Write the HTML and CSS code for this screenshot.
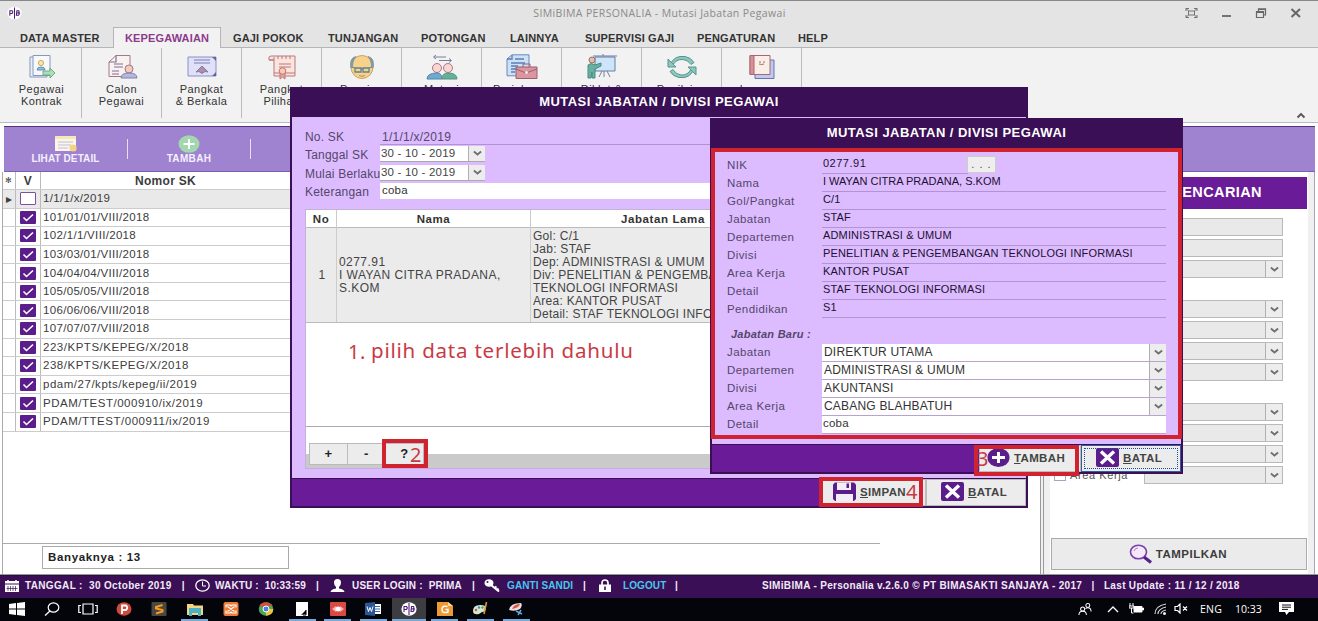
FILE: index.html
```html
<!DOCTYPE html>
<html lang="id">
<head>
<meta charset="utf-8">
<title>SIMiBIMA PERSONALIA - Mutasi Jabatan Pegawai</title>
<link rel="stylesheet" href="styles.css">
</head>
<body>
<svg width="0" height="0" class="defs">
  <symbol id="chev" viewBox="0 0 8 6"><path d="M.8 1.200 4 3.800l3.200-2.600" fill="none" stroke="#707070" stroke-width="1.700"/></symbol>
  <symbol id="check" viewBox="0 0 15 13"><path d="M3 6.500 6 9.500 12.500 3.500" fill="none" stroke="#fff" stroke-width="1.600"/></symbol>
  <symbol id="xbox" viewBox="0 0 23 19"><rect width="23" height="19" rx="2" fill="#5b1c8c"/><path d="M5 3.500 18 15.500M18 3.500 5 15.500" stroke="#fff" stroke-width="3.400"/></symbol>
  <symbol id="pb" viewBox="0 0 16 14"><ellipse cx="8" cy="7" rx="7.600" ry="6.700" fill="#fff"/><path d="M3 10V4.500h2.500q1.500 1.500 0 3H3M8 1v12M10.500 4.500h2q1 1.200-.5 2.300 2 1 0 2.700h-2zM10 7h4" fill="none" stroke="#4b1d78" stroke-width="1.100"/></symbol>
</svg>
<div class="app">
  <header class="titlebar">
    <svg class="logo" viewBox="0 0 16 14"><use href="#pb"/></svg>
    <span class="caption">SIMiBIMA PERSONALIA - Mutasi Jabatan Pegawai</span>
    <svg class="winbtns" viewBox="0 0 116 12" fill="none" stroke="#666" stroke-width="1.200">
      <path d="M1 4V1.500h3M9 1.500h3V4M12 8v2.500H9M4 10.500H1V8M3.500 4h6v4h-6zM1 1.500 3.500 4M12 1.500 9.500 4M1 10.500 3.500 8M12 10.500 9.500 8" stroke-width=".9"/>
      <path d="M37 9h9" stroke-width="1.800"/>
      <path d="M71.500 4.500h7v6h-7zM71.500 5.500h7M73.500 4V1.800h7V8h-1.500M73.500 2.500h7"/>
      <path d="M106.500 2 115 10M115 2l-8.500 8" stroke-width="2"/>
    </svg>
  </header>
  <nav class="tabs">
    <span class="tab w1">DATA MASTER</span><span class="tab on">KEPEGAWAIAN</span><span class="tab w2">GAJI POKOK</span><span class="tab w3">TUNJANGAN</span><span class="tab w4">POTONGAN</span><span class="tab w5">LAINNYA</span><span class="tab w6">SUPERVISI GAJI</span><span class="tab w7">PENGATURAN</span><span class="tab w8">HELP</span>
  </nav>
  <section class="ribbon">
    <div class="tool"><svg viewBox="0 0 32 26"><path d="M4 3h17v20H4z" fill="#e9eef8" stroke="#7d8fb8"/><path d="M7 1.500h17v20H7z" fill="#f7f9fc" stroke="#7d8fb8"/><circle cx="15" cy="9" r="2.600" fill="#f8e6a0" stroke="#c9a845"/><path d="M11 16q0-3 4-3t4 3z" fill="#8cb7d9" stroke="#5686b0"/><path d="M17 17h7v-3l5 5-5 5v-3h-7z" fill="#a7dcae" stroke="#5fa878"/></svg><span>Pegawai<br>Kontrak</span></div>
    <div class="tool"><svg viewBox="0 0 32 26"><path d="M10 1.500h14v21H3V8z" fill="#faf0f0" stroke="#9a6f80"/><path d="M10 1.500V8H3M8 10h9M8 13h9M6 17h7M6 20h7" fill="none" stroke="#76618b" stroke-width="1.200"/><circle cx="23" cy="15" r="4" fill="#f2c9b8" stroke="#9a6f80"/><path d="M15 24q0-5 8-5t8 5z" fill="#a9b3e0" stroke="#7c72a0"/></svg><span>Calon<br>Pegawai</span></div>
    <div class="tool"><svg viewBox="0 0 32 26"><path d="M2 3h28v19H2z" fill="#dfe0fa" stroke="#7e86c0"/><path d="M8 6h16M8 9h16" stroke="#6e70b4" stroke-width="1.200"/><path d="M10 18l6-6 6 6-3-.5-3 2-3-2z" fill="#b07f97" stroke="#6e70a4"/><path d="M26 3h4v4zM30 18v4h-4z" fill="#55598c"/></svg><span>Pangkat<br>&amp; Berkala</span></div>
    <div class="tool"><svg viewBox="0 0 32 26"><path d="M3 6q-1-4 2-4h24v20H8V6z" fill="#fce3d9" stroke="#b56a72"/><path d="M3 6h5V3M12 2v3M16 2v3M20 2v3M24 2v3M13 10h12M13 13h12M8 19h21" fill="none" stroke="#b56a72"/><path d="M14 18v7l2.500-2 2.500 2v-7" fill="#e89b92" stroke="#b56a72"/><circle cx="16.500" cy="17" r="3.300" fill="#fbc7a7" stroke="#b56a72"/></svg><span>Pangkat<br>Pilihan</span></div>
    <div class="tool"><svg viewBox="0 0 32 26"><ellipse cx="16" cy="13" rx="11" ry="11.500" fill="#f8cf83" stroke="#c79a55"/><path d="M5 14Q3 4 10 2.500 7 5 6.500 12zM27 14q2-10-5-11.500 3 2.500 3.500 9.500z" fill="#78909a" stroke="#78909a"/><path d="M9 14h6v4H9zM17 14h6v4h-6zM15 15h2M6 13l3 1M26 13l-3 1" fill="none" stroke="#4e7886" stroke-width="1.300"/><path d="M13 21.500q3 1.500 6 0" stroke="#bd7e3c" fill="none"/></svg><span>Pensiun</span></div>
    <div class="tool"><svg viewBox="0 0 32 26"><path d="M8 3h12M10 1 7.500 3 10 5M13 6.500h12M23 4.500l2.500 2-2.500 2" fill="none" stroke="#6a7591"/><circle cx="11" cy="14" r="4.500" fill="#f9d3cf" stroke="#a96a78"/><circle cx="22" cy="14" r="4.500" fill="#f9d3cf" stroke="#a96a78"/><path d="M1 25q0-6 10-6 5 0 5 6z" fill="#5da5cd" stroke="#477aa0"/><path d="M16 25q0-6 6-6 9 0 9 6z" fill="#53ac92" stroke="#498575"/></svg><span>Mutasi</span></div>
    <div class="tool"><svg viewBox="0 0 32 26"><path d="M6 .8h17v21H1V5z" fill="#c6e0f7" stroke="#5d7fb8"/><path d="M6 1v4H1M9 5h9M5 9h14M5 12h7M5 15h5M5 18h4" fill="none" stroke="#4f70b0" stroke-width="1.300"/><path d="M10 13h21v11.500H10z" fill="#d98e96" stroke="#934f68"/><path d="M17 13v-3h7v3M10 15l10 4 11-4" fill="none" stroke="#934f68"/><circle cx="20.500" cy="18.500" r="1.300" fill="#fff"/></svg><span>Perjalanan</span></div>
    <div class="tool"><svg viewBox="0 0 32 26"><path d="M7 2h24M17 0v2M9 3h20v14H9z" fill="#cbe3fa" stroke="#5a719e"/><path d="M18 17v6M16 17l-3 6M21 17l3 6" stroke="#707090"/><circle cx="6" cy="6" r="3" fill="#e9b79e" stroke="#8b685d"/><path d="M2 24V11q3-3 7 0l6-2v3l-6 3v9H6v-6l-1 6z" fill="#59aa98" stroke="#3c7f78"/></svg><span>Diklat &amp;</span></div>
    <div class="tool"><svg viewBox="0 0 32 26"><path d="M4 11Q8 1 19 2.500q6 1 9 6l-3 2Q22 6 17 5.500 10 5 7 11zM28 15q-4 10-15 8.500-6-1-9-6l3-2q3 5 8 5.500 7 .5 10-6z" fill="#81c3b5" stroke="#438b86"/><path d="M2 5v8h8zM30 21v-8h-8z" fill="#81c3b5" stroke="#438b86"/></svg><span>Penilaian</span></div>
    <div class="tool"><svg viewBox="0 0 32 26"><path d="M9 6h19v18.500H9z" fill="#b6c6ee" stroke="#5c67a6"/><path d="M4 1.500h20v19H4z" fill="#fdeee6" stroke="#9c5b6c"/><path d="M4 1.500h4v19H4z" fill="#d9848b" stroke="#9c5b6c"/><path d="M13 8h2M17 8h2M13 10q3 1 5 0" stroke="#9c5b6c" fill="none"/></svg><span>Laporan</span></div>
    <svg class="collapse" viewBox="0 0 10 7"><path d="M1.500 5.500 5 2l3.500 3.500" fill="none" stroke="#555" stroke-width="1.800"/></svg>
  </section>

  <main class="work">
    <div class="toolbar">
      <div class="act a1"><svg viewBox="0 0 24 18"><path d="M1 1h21v15H1z" fill="#fbf6ea"/><path d="M1 1h21v3H1z" fill="#f5e8b9"/><path d="M4 7h15M4 10h13M4 13h10" stroke="#c6bcd6"/><circle cx="19" cy="13" r="3.600" fill="#f5d384"/></svg><b>LIHAT DETAIL</b></div>
      <i class="sep"></i>
      <div class="act a2"><svg viewBox="0 0 24 18"><ellipse cx="12" cy="9" rx="10.500" ry="8.700" fill="#a3d7ae"/><path d="M12 4v10M6.500 9h11" stroke="#fff" stroke-width="2"/></svg><b>TAMBAH</b></div>
      <i class="sep"></i>
    </div>
    <div class="panes">
      <section class="left">
        <div class="row head"><span>✻</span><span>V</span><b>Nomor SK</b></div>
        <div class="row cur"><span>▸</span><span><i class="cb off"></i></span><em>1/1/1/x/2019</em></div>
        <div class="row"><span></span><span><svg class="cb"><use href="#check"/></svg></span><em>101/01/01/VIII/2018</em></div>
        <div class="row"><span></span><span><svg class="cb"><use href="#check"/></svg></span><em>102/1/1/VIII/2018</em></div>
        <div class="row"><span></span><span><svg class="cb"><use href="#check"/></svg></span><em>103/03/01/VIII/2018</em></div>
        <div class="row"><span></span><span><svg class="cb"><use href="#check"/></svg></span><em>104/04/04/VIII/2018</em></div>
        <div class="row"><span></span><span><svg class="cb"><use href="#check"/></svg></span><em>105/05/05/VIII/2018</em></div>
        <div class="row"><span></span><span><svg class="cb"><use href="#check"/></svg></span><em>106/06/06/VIII/2018</em></div>
        <div class="row"><span></span><span><svg class="cb"><use href="#check"/></svg></span><em>107/07/07/VIII/2018</em></div>
        <div class="row"><span></span><span><svg class="cb"><use href="#check"/></svg></span><em>223/KPTS/KEPEG/X/2018</em></div>
        <div class="row"><span></span><span><svg class="cb"><use href="#check"/></svg></span><em>238/KPTS/KEPEG/X/2018</em></div>
        <div class="row"><span></span><span><svg class="cb"><use href="#check"/></svg></span><em>pdam/27/kpts/kepeg/ii/2019</em></div>
        <div class="row"><span></span><span><svg class="cb"><use href="#check"/></svg></span><em>PDAM/TEST/000910/ix/2019</em></div>
        <div class="row"><span></span><span><svg class="cb"><use href="#check"/></svg></span><em>PDAM/TTEST/000911/ix/2019</em></div>
        <div class="count"><b>Banyaknya : 13</b></div>
      </section>
      <aside class="right">
        <div class="search">
          <h2>PENCARIAN</h2>
          <div class="fields">
            <div class="inp"></div><div class="inp"></div><div class="inp dd"><u><svg><use href="#chev"/></svg></u></div>
            <div class="inp dd gap"><u><svg><use href="#chev"/></svg></u></div><div class="inp dd"><u><svg><use href="#chev"/></svg></u></div><div class="inp dd"><u><svg><use href="#chev"/></svg></u></div><div class="inp dd"><u><svg><use href="#chev"/></svg></u></div>
            <div class="inp dd gap"><u><svg><use href="#chev"/></svg></u></div><div class="inp dd"><u><svg><use href="#chev"/></svg></u></div><div class="inp dd"><u><svg><use href="#chev"/></svg></u></div>
            <div class="frow"><i></i><label>Area Kerja</label><div class="inp dd"><u><svg><use href="#chev"/></svg></u></div></div>
          </div>
          <div class="go"><svg viewBox="0 0 24 20"><ellipse cx="9.500" cy="8" rx="8" ry="6.800" fill="#f3e9fa" stroke="#7a3fa8" stroke-width="1.600"/><path d="M5 7q1-3 4-3" fill="none" stroke="#a87cc9"/><path d="M15 13l7 5.500" stroke="#55208a" stroke-width="3.200"/></svg><b>TAMPILKAN</b></div>
        </div>
      </aside>
    </div>
  </main>

  <footer class="status">
    <svg class="s1" viewBox="0 0 14 12"><path d="M0 1h14v2.500H0zM0 4.500h14V12H0z" fill="#fff"/><path d="M3 6v5M5.500 6v5M8 6v5M10.500 6v5M1.500 8.500h11" stroke="#3a0f55" stroke-width=".7"/><path d="M3 0v2M11 0v2" stroke="#fff" stroke-width="1.500"/></svg>
    <b class="t1">TANGGAL :&nbsp; 30 October 2019 <i>|</i></b>
    <svg class="s2" viewBox="0 0 15 13"><ellipse cx="7.500" cy="6.500" rx="6.700" ry="5.700" fill="none" stroke="#fff" stroke-width="1.300"/><path d="M7.500 2.500V7H11" fill="none" stroke="#fff"/></svg>
    <b class="t2">WAKTU :&nbsp; 10:33:59 <i>|</i></b>
    <svg class="s3" viewBox="0 0 15 13"><path d="M7.500 0Q11 0 11 3.500T9 8v1.500q5 .5 5.500 3.500H.5Q1 10 6 9.500V8Q4 7 4 3.500T7.500 0z" fill="#fff"/></svg>
    <b class="t3">USER LOGIN :&nbsp; PRIMA <i>|</i></b>
    <svg class="s4" viewBox="0 0 16 13"><ellipse cx="5" cy="4" rx="4.500" ry="3.800" fill="#fff"/><circle cx="3.500" cy="3" r="1" fill="#3a0f55"/><path d="M7 6l8 6.500M10.500 9l2-1.500M13 11l1.500-1.500" stroke="#fff" stroke-width="2"/></svg>
    <b class="t4"><a>GANTI SANDI</a> <i>|</i></b>
    <svg class="s5" viewBox="0 0 12 13"><path d="M3 6V4q0-3 3-3t3 3v2" fill="none" stroke="#fff" stroke-width="1.700"/><path d="M0 5.500h12V13H0z" fill="#fff"/><path d="M6 7.500v3.500" stroke="#3a0f55" stroke-width="1.600"/></svg>
    <b class="t5"><a>LOGOUT</a> <i>|</i></b>
    <b class="t6">SIMiBIMA - Personalia v.2.6.0 © PT BIMASAKTI SANJAYA - 2017 &nbsp; | &nbsp; Last Update : 11 / 12 / 2018</b>
  </footer>
  <footer class="task">
    <div class="apps">
      <span class="nr"><svg viewBox="0 0 16 14"><path d="M0 2l7-1v5.600H0zM8 .9 16 0v6.600H8zM0 7.500h7V13l-7-1zM8 7.500h8V14l-8-1z" fill="#fff"/></svg></span>
      <span class="nr"><svg viewBox="0 0 16 14"><ellipse cx="9.500" cy="5.500" rx="5.300" ry="4.700" fill="none" stroke="#fff" stroke-width="1.200"/><path d="M6 9l-5 4.500" stroke="#fff" stroke-width="1.300"/></svg></span>
      <span class="nr"><svg viewBox="0 0 20 14" class="wide"><path d="M5 2h10v10H5zM3 3.500H.8v7H3M17 3.500h2.200v7H17" fill="none" stroke="#fff" stroke-width="1.200"/></svg></span>
      <span class="nr"><svg viewBox="0 0 16 14"><ellipse cx="8" cy="7" rx="7.500" ry="6.800" fill="#cf4a3d"/><path d="M6 12V3.500h4q2.500 2 0 4.500H6" fill="none" stroke="#fff" stroke-width="1.800"/></svg></span>
      <span class="nr"><svg viewBox="0 0 16 14"><rect x=".5" width="15" height="14" rx="1" fill="#4a4743"/><path d="M11.500 3 5 5v1.500l6.500 1.500v1.500L5 11.500" fill="none" stroke="#f59a23" stroke-width="2"/></svg></span>
      <span><svg viewBox="0 0 16 14"><path d="M0 2h6l1 1.500h9V13H0z" fill="#f3d582"/><path d="M2 6h12v8h-3v-3H5v3H2z" fill="#4db1c5"/></svg></span>
      <span class="nr"><svg viewBox="0 0 16 14"><rect x=".5" width="15" height="14" rx="2" fill="#ee7b36"/><path d="M4.500 4.500l7 5M11.500 4.500l-7 5M3 5.500V3h4L8 4l1-1h4v2.500M3 8.500V11h4l1-1 1 1h4V8.500" fill="none" stroke="#fff" stroke-width="1.200"/></svg></span>
      <span class="nr"><svg viewBox="0 0 16 14"><ellipse cx="8" cy="7" rx="7.300" ry="6.700" fill="#4ca653"/><path d="M8 7 1.500 3.500Q4 .3 8 .3t6.700 3.500H8z" fill="#d94d3d"/><path d="M8 7h7.300Q15 13 8 13.700z" fill="#f2c43e"/><circle cx="8" cy="7" r="3" fill="#4b83dc" stroke="#fff"/></svg></span>
      <span><svg viewBox="0 0 16 14"><path d="M2 0h12v14H2z" fill="#fff"/><path d="M7 13l5-5v4z" fill="#000"/><path d="M12 8v5H9" stroke="#000" fill="none"/></svg></span>
      <span><svg viewBox="0 0 16 14"><rect width="16" height="14" rx="1" fill="#d94a45"/><path d="M2 7l4-3v6zM14 7l-4-3v6z" fill="#ffb4ad"/><circle cx="8" cy="7" r="2.500" fill="#fff"/></svg></span>
      <span><svg viewBox="0 0 16 14"><path d="M8 2h8v10H8z" fill="#fff"/><path d="M10 4.500h5M10 7h5M10 9.500h5" stroke="#3567ab"/><path d="M0 1l10-1v14L0 13z" fill="#2b5797"/><path d="M2 4.500 3.500 9.500 5 5.500l1.500 4L8 4.500" stroke="#fff" fill="none"/></svg></span>
      <span class="act-app"><svg viewBox="0 0 16 14"><use href="#pb"/></svg></span>
      <span><svg viewBox="0 0 16 14"><path d="M0 0h11l5 4v10H0z" fill="#ed9a35"/><path d="M11 0v4h5z" fill="#fbd9a4"/><path d="M10.500 4.500Q5 3 5 7.500T11 10V7.500H8.500" fill="none" stroke="#fff" stroke-width="1.500"/></svg></span>
      <span><svg viewBox="0 0 16 14"><path d="M1 9Q1 3 8 3t6 4q-1 3-4 3l-3 2Q1 13 1 9z" fill="#d5e8cf"/><circle cx="4" cy="8" r="1.200" fill="#d05040"/><circle cx="7" cy="5.500" r="1.200" fill="#4a83c3"/><circle cx="10.500" cy="5.500" r="1.200" fill="#4aa650"/><path d="M14.500 0 12 12" stroke="#d6974a" stroke-width="1.600"/></svg></span>
      <span><svg viewBox="0 0 16 14"><path d="M1 8Q2 1 13 1q2 2-1 6-5 3-11 1z" fill="#f1dede"/><path d="M4 7q2-5 8-5-1 4-8 5z" fill="#d8584c"/><path d="M8 9l6 3M13 8l-3 5" stroke="#5fa7dd" stroke-width="1.500"/></svg></span>
    </div>
    <div class="tray">
      <svg class="people" viewBox="0 0 15 13" fill="none" stroke="#fff" stroke-width="1.100"><circle cx="5" cy="6.500" r="2.200"/><path d="M1 13q0-4 4-4t4 4"/><circle cx="10.500" cy="2.800" r="2.100"/><path d="M8 6q1-.8 2.500-.8 3.500 0 3.500 4"/></svg>
      <svg class="caret" viewBox="0 0 12 8"><path d="M1 7l5-5 5 5" fill="none" stroke="#fff" stroke-width="1.300"/></svg>
      <svg class="battery" viewBox="0 0 15 11"><path d="M5 3.500h8v5.500H5zM13.500 5h1v2h-1z" fill="#fff" stroke="#fff"/><path d="M1 0v3M4 0v3M0 3h5v2H0zM2.500 5v5h2" fill="none" stroke="#fff"/></svg>
      <svg class="wifi" viewBox="0 0 13 12" fill="none" stroke="#ddd" stroke-width="1.100"><path d="M1 11Q1 3 12 1M4 11q0-5 8-7M7 11q0-3 5-4"/><circle cx="10.500" cy="10.500" r="1" fill="#fff"/></svg>
      <svg class="volume" viewBox="0 0 14 11" fill="none" stroke="#fff" stroke-width="1.200"><path d="M1 3.500h2.500L6 1v9L3.500 7.500H1zM9 3.500l4 4M13 3.500l-4 4"/></svg>
      <span class="eng">ENG</span><span class="clk">10:33</span>
      <svg class="notif" viewBox="0 0 15 13"><path d="M0 0h15v10h-5l-2.500 3L6 10H0z" fill="#fff"/><path d="M3 3h9M3 5.200h9M3 7.400h6" stroke="#111"/></svg>
    </div>
  </footer>

  <div class="dlg d1">
    <div class="dtitle">MUTASI JABATAN / DIVISI PEGAWAI</div>
    <div class="dbody">
      <div class="frm">
        <label>No. SK</label><span class="val">1/1/1/x/2019</span>
        <label>Tanggal SK</label><span class="date">30 - 10 - 2019<u><svg><use href="#chev"/></svg></u></span>
        <label>Mulai Berlaku</label><span class="date">30 - 10 - 2019<u><svg><use href="#chev"/></svg></u></span>
        <label>Keterangan</label><span class="txt">coba</span>
      </div>
      <div class="grid">
        <div class="gh"><b>No</b><b>Nama</b><b class="jl">Jabatan Lama</b></div>
        <div class="gr"><span>1</span><span>0277.91<br>I WAYAN CITRA PRADANA,<br>S.KOM</span><span>Gol: C/1<br>Jab: STAF<br>Dep: ADMINISTRASI &amp; UMUM<br>Div: PENELITIAN &amp; PENGEMBANGAN<br>TEKNOLOGI INFORMASI<br>Area: KANTOR PUSAT<br>Detail: STAF TEKNOLOGI INFORMASI</span></div>
        <div class="gempty"></div>
        <div class="gnav"><b>+</b><b>-</b><b>?</b></div>
      </div>
    </div>
    <div class="dfoot"><div class="btn simpan"><svg viewBox="0 0 23 19"><path d="M2 .5h19l2 2V17l-2 2H2l-2-2V2.500z" fill="#5b1c8c"/><path d="M4 .5h14v7.500H4zM3 12h17v7H3z" fill="#f3edf5"/><path d="M13.500 1.500h2.500v4.500h-2.500z" fill="#5b1c8c"/></svg><b><u>S</u>IMPAN</b></div><div class="btn batal"><svg><use href="#xbox"/></svg><b><u>B</u>ATAL</b></div></div>
  </div>

  <div class="dlg d2">
    <div class="dtitle">MUTASI JABATAN / DIVISI PEGAWAI</div>
    <div class="dbody">
      <div class="frm2">
        <label>NIK</label><span class="ln first">0277.91</span>
        <label>Nama</label><span class="ln name">I WAYAN CITRA PRADANA, S.KOM</span>
        <label>Gol/Pangkat</label><span class="ln">C/1</span>
        <label>Jabatan</label><span class="ln">STAF</span>
        <label>Departemen</label><span class="ln">ADMINISTRASI &amp; UMUM</span>
        <label>Divisi</label><span class="ln">PENELITIAN &amp; PENGEMBANGAN TEKNOLOGI INFORMASI</span>
        <label>Area Kerja</label><span class="ln">KANTOR PUSAT</span>
        <label>Detail</label><span class="ln">STAF TEKNOLOGI INFORMASI</span>
        <label>Pendidikan</label><span class="ln">S1</span>
      </div>
      <div class="dots">. . .</div>
      <div class="baru">Jabatan Baru :</div>
      <div class="frm2 edit">
        <label>Jabatan</label><span class="sel">DIREKTUR UTAMA<u><svg><use href="#chev"/></svg></u></span>
        <label>Departemen</label><span class="sel">ADMINISTRASI &amp; UMUM<u><svg><use href="#chev"/></svg></u></span>
        <label>Divisi</label><span class="sel">AKUNTANSI<u><svg><use href="#chev"/></svg></u></span>
        <label>Area Kerja</label><span class="sel">CABANG BLAHBATUH<u><svg><use href="#chev"/></svg></u></span>
        <label>Detail</label><span class="sel last">coba</span>
      </div>
    </div>
    <div class="dfoot"><div class="btn tambah"><svg viewBox="0 0 23 19"><ellipse cx="11.500" cy="9.500" rx="11" ry="9.500" fill="#5b1c8c"/><path d="M11.500 4v11M5 9.500h13" stroke="#fff" stroke-width="3"/></svg><b><u>T</u>AMBAH</b></div><div class="btn batal focus"><svg><use href="#xbox"/></svg><b><u>B</u>ATAL</b></div></div>
  </div>

  <div class="mark m0"></div>
  <div class="mark m2"></div><div class="mark m3"></div><div class="mark m4"></div>
  <div class="note n1">1.</div><div class="note n1b">pilih data terlebih dahulu</div>
  <div class="note n2">2</div><div class="note n3">3</div><div class="note n4">4</div>
</div>
</body>
</html>
```
FILE: styles.css
```css
* { box-sizing: border-box; }
body { margin: 0; font-family: "Liberation Sans", Arial, sans-serif; font-size: 11px; color: #3c3c3c; letter-spacing: .6px; }
.defs { position: absolute; }
.app { position: relative; width: 1318px; height: 621px; overflow: hidden; display: flex; flex-direction: column; background: #f2f2f2; white-space: nowrap; }
em { font-style: normal; }
svg { display: block; flex: none; }

.titlebar { height: 27px; background: #e4e4e4; border-top: 1px solid #888; display: flex; align-items: center; padding: 0 17px 2px 7px; }
.logo { width: 15px; height: 14px; }
.caption { flex: 1; text-align: center; font: 10.500px "Open Sans", sans-serif; color: #8a8a8a; letter-spacing: .37px; padding-left: 112px; }
.winbtns { width: 116px; height: 12px; }

.tabs { height: 21px; background: #e4e4e4; border-bottom: 1px solid #b5b5b5; display: flex; padding-left: 20px; font-weight: bold; font-size: 11px; color: #333; letter-spacing: .15px; }
.tab { line-height: 23px; height: 21px; }
.tab.on { width: 108px; background: #f2f2f2; border: 1px solid #b5b5b5; border-bottom: 0; color: #8d3a8d; text-align: center; line-height: 21px; }
.w1 { width: 93px; } .w2 { width: 107px; padding-left: 12px; } .w3 { width: 93px; } .w4 { width: 89px; } .w5 { width: 75px; } .w6 { width: 112px; } .w7 { width: 101px; }

.ribbon { height: 75px; background: #f2f2f2; display: flex; padding-left: 2px; border-bottom: 1px solid #b9b9c4; }
.tool { width: 80px; height: 70px; border-right: 1px solid #bcbcbc; display: flex; flex-direction: column; align-items: center; padding-top: 6px; font-size: 11px; line-height: 12px; text-align: center; color: #333; letter-spacing: .45px; }
.tool svg { width: 32px; height: 26px; opacity: .9; margin-bottom: 3px; }
.collapse { width: 10px; height: 7px; margin: 64px 12px 0 auto; }

.work { height: 452px; padding: 3px 3px 0 2px; display: flex; flex-direction: column; background: #fff; border-bottom: 1px solid #999; }
.toolbar { height: 46px; margin-left: 2px; background: #9f83d0; border-top: 1px solid #57307a; border-bottom: 1px solid #7c5caf; display: flex; align-items: center; color: #fff; }
.act { display: flex; flex-direction: column; align-items: center; font-size: 10px; letter-spacing: .1px; padding-top: 1px; color: #f6f0fc; }
.act svg { width: 24px; height: 18px; }
.a1 { width: 123px; } .a2 { width: 122px; }
.a2 b { letter-spacing: .35px; }
.sep { width: 1px; height: 20px; background: #e8def5; }
.panes { flex: 1; display: flex; min-height: 0; }
.left { width: 1032px; border-left: 1px solid #aaa; display: flex; flex-direction: column; }
.row { display: grid; grid-template-columns: 13px 25px 1fr; height: 18.580px; width: 877px; font-size: 11.500px; border-bottom: 1px solid #ccc; flex: none; align-items: center; }
.row > span { border-right: 1px solid #bbb; height: 100%; display: flex; align-items: center; justify-content: center; }
.row em { padding-left: 2px; letter-spacing: .32px; line-height: 14px; margin-top: -1px; }
.row:nth-child(n+10) em { letter-spacing: .52px; }
.head { height: 18px; font-size: 12px; font-weight: bold; letter-spacing: .3px; }
.head > span:first-child { font-size: 8px; font-weight: normal; }
.head b { text-align: center; width: 249px; }
.cur { background: #e9e9e9; }
.cb { width: 16px; height: 13px; background: #5b1c8c; border-radius: 1px; }
.cb.off { background: #fff; border: 1px solid #7c52a0; }
.count { margin-top: auto; height: 31px; width: 877px; border-top: 1px solid #aaa; padding: 2px 0 0 39px; font-size: 11.500px; color: #222; }
.count b { display: block; width: 247px; height: 23px; border: 1px solid #aaa; line-height: 21px; padding-left: 5px; letter-spacing: .65px; }
.right { flex: 1; margin-left: 6px; border-left: 1px solid #999; background: #f0f0f0; padding: 0 6px 0 9px; border-right: 1px solid #a9a0c0; box-shadow: inset 2px 0 0 #f0f0f0, inset 3px 0 0 #999; }
.search { height: 100%; background: #fff; padding: 5px 1px 0 1px; display: flex; flex-direction: column; }
.search h2 { margin: 0; height: 32px; background: #6a1b97; color: #fff; font-size: 14.500px; line-height: 31px; text-align: right; padding-right: 45px; letter-spacing: .4px; }
.fields { padding: 9px 24px 0 0; display: flex; flex-direction: column; gap: 3px; align-items: flex-end; }
.inp { width: 139px; height: 18px; border: 1px solid #b9b9b9; background: #e9e9e9; display: flex; justify-content: flex-end; }
.inp.gap { margin-top: 19px; }
.inp u, .date u, .sel u { width: 17px; border-left: 1px solid #b0b0b0; display: flex; align-items: center; justify-content: center; background: #ededed; }
u svg { width: 9px; height: 7px; }
.frow { display: flex; align-items: center; width: 232px; }
.frow i { width: 12px; height: 11px; border: 1px solid #b0a0c0; margin-left: 3px; }
.frow label { flex: 1; padding-left: 4px; color: #555; }
.go { margin-top: auto; margin-bottom: 4px; height: 32px; background: #ebebeb; border: 1px solid #aaa; display: flex; align-items: center; justify-content: center; gap: 3px; font-size: 11.500px; letter-spacing: .5px; padding-right: 2px; }
.go svg { width: 24px; height: 20px; }

.status { height: 23px; background: #3a0f55; border-top: 1px solid #2b0b40; display: flex; align-items: center; color: #f2eaf7; font-size: 10px; padding: 0 0 3px 5px; letter-spacing: .35px; }
.status a { color: #45c8ee; }
.status b { display: flex; justify-content: space-between; white-space: pre; }
.status i { font-style: normal; }
.s1 { width: 14px; height: 12px; margin-right: 6px; }
.t1 { width: 160px; margin-right: 10px; } .s2 { width: 15px; height: 13px; margin-right: 5px; } .t2 { width: 104px; letter-spacing: .15px; margin-right: 11px; } .s3 { width: 15px; height: 13px; margin-right: 7px; } .t3 { width: 123px; letter-spacing: .2px; margin-right: 9px; } .s4 { width: 16px; height: 13px; margin-right: 7px; } .t4 { width: 79px; letter-spacing: .1px; margin-right: 13px; } .s5 { width: 12px; height: 13px; margin-right: 12px; } .t5 { width: 55px; letter-spacing: .1px; margin-right: 84px; }
.status .t6 { display: block; white-space: nowrap; letter-spacing: .32px; }

.task { height: 23px; background: #04050a; display: flex; justify-content: space-between; color: #fff; }
.apps { display: flex; padding-left: 1px; }
.apps span { width: 27px; margin-right: 8.700px; height: 23px; border-bottom: 2px solid #76aadb; display: flex; justify-content: center; padding-top: 4px; }
.apps span:first-child { margin-left: 2px; }
.apps .nr { border-color: transparent; }
.apps .act-app { background: #3d3d41; width: 34px; margin-left: -3.500px; margin-right: 5.200px; }
.apps svg { width: 16px; height: 14px; }
.apps .wide { width: 20px; }
.tray { display: flex; align-items: center; padding: 0 24px 2px 0; font: 10.500px "Open Sans", sans-serif; letter-spacing: .2px; }
.people { width: 14px; height: 14px; margin-right: 15px; } .caret { width: 12px; height: 8px; margin-right: 10px; } .battery { width: 15px; height: 11px; margin-right: 10px; } .wifi { width: 13px; height: 12px; margin-right: 7px; } .volume { width: 14px; height: 11px; margin-right: 12px; } .eng { width: 35px; } .clk { width: 44px; letter-spacing: 0; } .notif { width: 15px; height: 13px; }

.dlg { position: absolute; border: 2px solid #3a0f55; background: #dcbcff; display: flex; flex-direction: column; overflow: hidden; color: #55466b; }
.d1 { left: 290px; top: 87px; width: 738px; height: 421px; }
.d2 { left: 710px; top: 118px; width: 473px; height: 356px; }
.dtitle { height: 28px; background: #3a0f55; color: #fff; font-weight: bold; font-size: 13px; line-height: 25px; text-align: center; letter-spacing: .46px; }
.d1 .dtitle { height: 29px; border-bottom: 1px solid #dcbcff; }
.dfoot { height: 28px; background: #6a1b97; border-top: 1px solid #3a0f55; display: flex; justify-content: flex-end; }
.dbody { flex: 1; position: relative; min-height: 0; }
.btn { background: #ececec; display: flex; align-items: center; font-size: 11.500px; color: #444; letter-spacing: .35px; border: 1px solid #bbb; padding-bottom: 2px; }
.btn svg { width: 23px; height: 19px; }
.simpan { width: 104px; padding-left: 10px; gap: 4px; } .d1 .batal { width: 100px; padding-left: 14px; gap: 4px; }
.tambah { width: 102px; padding-left: 7px; gap: 4px; } .d2 .batal { width: 100px; padding-left: 14px; gap: 4px; }
.focus { outline: 1px dotted #1f4e96; outline-offset: -4px; border: 1px solid #2f5da8; }
.frm { padding: 9px 0 0 13px; display: grid; grid-template-columns: 75px 1fr; grid-auto-rows: 18.300px; font-size: 12px; }
.frm label { line-height: 21px; letter-spacing: .2px; }
.val { border-bottom: 1px solid #b193d2; padding-left: 2px; line-height: 20px; letter-spacing: .25px; }
.date { width: 105px; background: #fff; height: 16px; margin-top: 1px; display: flex; justify-content: space-between; padding-left: 1px; line-height: 15px; letter-spacing: .2px; font-size: 11.500px; color: #444; border-bottom: 1px solid #aaa; }
.txt { background: #fff; height: 16px; margin-top: 1px; padding-left: 2px; line-height: 14px; color: #333; font-size: 11.500px; letter-spacing: .2px; }
.grid { margin: 9px 8px 0 13px; border: 1px solid #c3b2d4; background: #fff; height: 260px; display: flex; flex-direction: column; color: #444; }
.gh, .gr { display: grid; grid-template-columns: 31px 194px 1fr; border-bottom: 1px solid #bbb; }
.gh { height: 18px; font-size: 11.500px; text-align: center; line-height: 18px; color: #333; }
.gh b, .gr span { border-right: 1px solid #ccc; }
.gh .jl { text-align: left; padding-left: 90px; }
.gr { height: 95px; background: #ebebeb; font-size: 12px; line-height: 13px; align-items: stretch; letter-spacing: .35px; }
.gr span { display: flex; align-items: center; padding-left: 2px; }
.gr span:first-child { justify-content: center; }
.gr span:nth-child(2) { letter-spacing: .45px; }
.gr span:nth-child(3) { letter-spacing: .27px; }
.gempty { height: 104px; border-bottom: 1px solid #b0a8b8; }
.gnav { margin-top: auto; height: 27px; display: flex; padding: 0 0 3px 3px; background: linear-gradient(#fff 13px, #cacaca 13px); color: #222; font-size: 13px; }
.gnav b { width: 39px; height: 22px; border: 1px solid #bbb; background: #ececec; margin-right: -1px; text-align: center; line-height: 19px; margin-top: 2px; }
.frm2 { padding: 8px 15px 0 15px; display: grid; grid-template-columns: 95px 1fr; grid-auto-rows: 17.970px; font-size: 11.500px; }
.frm2 label { line-height: 18px; letter-spacing: .4px; }
.ln { border-bottom: 1px solid #b094d3; color: #1d1030; line-height: 15px; padding-left: 1px; font-size: 11px; letter-spacing: .15px; }
.ln.name { letter-spacing: 0; }
.ln.first { margin-right: 198px; letter-spacing: .5px; }
.dots { position: absolute; left: 255px; top: 8px; width: 29px; height: 17px; background: #eee; border: 1px solid #ccc; text-align: center; line-height: 14px; letter-spacing: 1px; }
.baru { font-weight: bold; font-style: italic; padding: 9px 0 0 19px; height: 26px; line-height: 14px; letter-spacing: .25px; }
.edit.frm2 { padding-top: 0; }
.sel { background: #fff; color: #333; display: flex; justify-content: space-between; line-height: 16px; padding-left: 2px; border-bottom: 1px solid #b7a2d2; letter-spacing: .2px; font-size: 12px; }
.sel.last { font-size: 11.500px; padding-left: 1px; line-height: 14px; }
.edit label { line-height: 17px; }

.mark { position: absolute; border: 4px solid #d0222f; }
.m0 { left: 711px; top: 148px; width: 471px; height: 291px; }
.m2 { left: 382px; top: 439px; width: 46px; height: 29px; }
.m3 { left: 974px; top: 445px; width: 105px; height: 31px; }
.m4 { left: 819px; top: 477px; width: 104px; height: 30px; }
.note { position: absolute; color: #c93a45; font: 20px "Noto Sans", "Open Sans", sans-serif; line-height: 24px; letter-spacing: .6px; }
.n1 { left: 348px; top: 340px; } .n1b { left: 371px; top: 338px; font-size: 20.500px; letter-spacing: .78px; } .n2 { left: 410px; top: 443px; } .n3 { left: 977px; top: 447px; } .n4 { left: 906px; top: 480px; }
```
